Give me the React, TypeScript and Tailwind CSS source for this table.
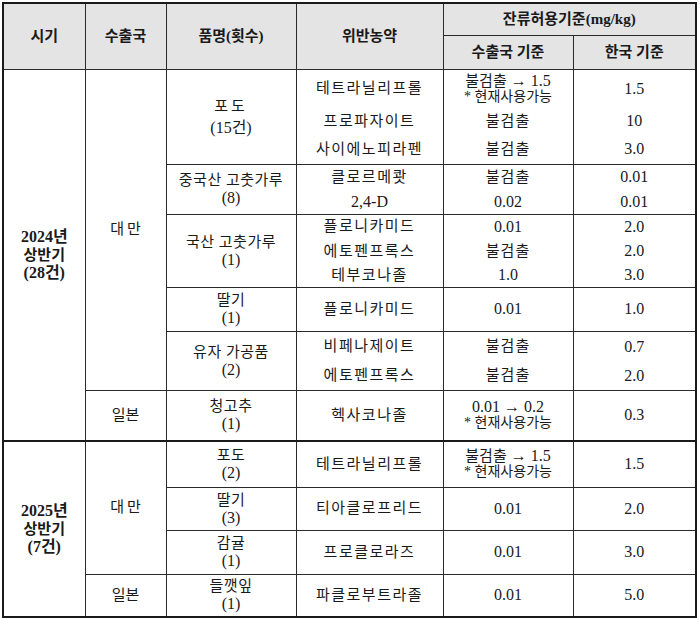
type Line = { name: string; exp: string[]; kr: string; h: number }
type Item = { product: string; count: string; lines: Line[]; gap?: boolean }
type Country = { name: string; wide?: boolean; items: Item[] }
type Period = { year: string; total: string; countries: Country[] }

const NOW = '* 현재사용가능'

const PERIODS: Period[] = [
  {
    year: '2024년',
    total: '(28건)',
    countries: [
      {
        name: '대만',
        wide: true,
        items: [
          {
            product: '포도',
            count: '(15건)',
            gap: true,
            lines: [
              { name: '테트라닐리프롤', exp: ['불검출 → 1.5', NOW], kr: '1.5', h: 38 },
              { name: '프로파자이트', exp: ['불검출'], kr: '10', h: 27 },
              { name: '사이에노피라펜', exp: ['불검출'], kr: '3.0', h: 29 },
            ],
          },
          {
            product: '중국산 고춧가루',
            count: '(8)',
            lines: [
              { name: '클로르메쾃', exp: ['불검출'], kr: '0.01', h: 25 },
              { name: '2,4-D', exp: ['0.02'], kr: '0.01', h: 24 },
            ],
          },
          {
            product: '국산 고춧가루',
            count: '(1)',
            lines: [
              { name: '플로니카미드', exp: ['0.01'], kr: '2.0', h: 24 },
              { name: '에토펜프록스', exp: ['불검출'], kr: '2.0', h: 25 },
              { name: '테부코나졸', exp: ['1.0'], kr: '3.0', h: 23 },
            ],
          },
          {
            product: '딸기',
            count: '(1)',
            lines: [{ name: '플로니카미드', exp: ['0.01'], kr: '1.0', h: 43 }],
          },
          {
            product: '유자 가공품',
            count: '(2)',
            lines: [
              { name: '비페나제이트', exp: ['불검출'], kr: '0.7', h: 30 },
              { name: '에토펜프록스', exp: ['불검출'], kr: '2.0', h: 28 },
            ],
          },
        ],
      },
      {
        name: '일본',
        items: [
          {
            product: '청고추',
            count: '(1)',
            lines: [{ name: '헥사코나졸', exp: ['0.01 → 0.2', NOW], kr: '0.3', h: 49 }],
          },
        ],
      },
    ],
  },
  {
    year: '2025년',
    total: '(7건)',
    countries: [
      {
        name: '대만',
        wide: true,
        items: [
          {
            product: '포도',
            count: '(2)',
            lines: [{ name: '테트라닐리프롤', exp: ['불검출 → 1.5', NOW], kr: '1.5', h: 45 }],
          },
          {
            product: '딸기',
            count: '(3)',
            lines: [{ name: '티아클로프리드', exp: ['0.01'], kr: '2.0', h: 42 }],
          },
          {
            product: '감귤',
            count: '(1)',
            lines: [{ name: '프로클로라즈', exp: ['0.01'], kr: '3.0', h: 43 }],
          },
        ],
      },
      {
        name: '일본',
        items: [
          {
            product: '들깻잎',
            count: '(1)',
            lines: [{ name: '파클로부트라졸', exp: ['0.01'], kr: '5.0', h: 41 }],
          },
        ],
      },
    ],
  },
]

const cell = 'border border-[#2a2a2a] p-0 text-center align-middle'
const num = 'text-[16px]'

function Stack({ lines, pick }: { lines: Line[]; pick: 'name' | 'exp' | 'kr' }) {
  return (
    <div className="flex flex-col">
      {lines.map((l, i) => (
        <div key={i} className="flex flex-col items-center justify-center" style={{ height: l.h }}>
          {pick === 'name' &&
            (/^[0-9]/.test(l.name) ? (
              <span className={num}>{l.name}</span>
            ) : (
              <span className="tracking-[1.5px]">{l.name}</span>
            ))}
          {pick === 'kr' && <span className={num}>{l.kr}</span>}
          {pick === 'exp' &&
            (l.exp.length > 1 ? (
              <div className="leading-[16px]">
                <div className={num}>
                  {l.exp[0].startsWith('불') ? (
                    <>
                      <span className="text-[15px]">불검출</span>
                      {l.exp[0].slice(3)}
                    </>
                  ) : (
                    l.exp[0]
                  )}
                </div>
                <div className="text-[14px]">{l.exp[1]}</div>
              </div>
            ) : /^[0-9]/.test(l.exp[0]) ? (
              <span className={num}>{l.exp[0]}</span>
            ) : (
              <span className="tracking-[1px]">{l.exp[0]}</span>
            ))}
        </div>
      ))}
    </div>
  )
}

export default function App() {
  return (
    <div
      className="min-h-[618px] bg-white pl-[2px] pt-[2px] text-[15px] text-[#1a1a1a]"
      style={{ fontFamily: '"Liberation Serif", "Noto Sans CJK KR", serif' }}
    >
      <div className="w-[695px] border-2 border-[#1a1a1a]">
        <table className="w-full table-fixed border-collapse border-hidden">
          <colgroup>
            <col className="w-[81px]" />
            <col className="w-[81px]" />
            <col className="w-[130px]" />
            <col className="w-[147px]" />
            <col className="w-[130px]" />
            <col />
          </colgroup>
          <thead className="bg-[#e4e4e4] font-bold">
            <tr className="h-[31px]">
              <th rowSpan={2} className={cell}>시기</th>
              <th rowSpan={2} className={cell}>수출국</th>
              <th rowSpan={2} className={cell}>품명(횟수)</th>
              <th rowSpan={2} className={cell}>위반농약</th>
              <th colSpan={2} className={cell}>잔류허용기준(mg/kg)</th>
            </tr>
            <tr className="h-[34px]">
              <th className={cell}>수출국 기준</th>
              <th className={cell}>한국 기준</th>
            </tr>
          </thead>
          <tbody>
            {PERIODS.map((p, pi) => {
              const rows = p.countries.reduce((n, c) => n + c.items.length, 0)
              return p.countries.map((c, ci) =>
                c.items.map((it, ii) => {
                  const top = pi > 0 && ci === 0 && ii === 0 ? 'border-t-2 border-t-[#1a1a1a]' : ''
                  return (
                    <tr key={`${pi}-${ci}-${ii}`}>
                      {ci === 0 && ii === 0 && (
                        <td rowSpan={rows} className={`${cell} ${top} font-bold leading-[18px]`}>
                          <div className="text-[16px]">{p.year}</div>
                          <div>상반기</div>
                          <div className="text-[16px]">{p.total}</div>
                        </td>
                      )}
                      {ii === 0 && (
                        <td rowSpan={c.items.length} className={`${cell} ${top}`}>
                          <span className={c.wide ? 'tracking-[3px] pl-[3px]' : ''}>{c.name}</span>
                        </td>
                      )}
                      <td className={`${cell} ${top}`}>
                        <div className={it.gap ? 'leading-[21px]' : 'leading-[17px]'}>
                          <div className={it.gap ? 'tracking-[3px]' : 'tracking-[0.5px]'}>{it.product}</div>
                          <div className={num}>{it.count}</div>
                        </div>
                      </td>
                      <td className={`${cell} ${top}`}>
                        <Stack lines={it.lines} pick="name" />
                      </td>
                      <td className={`${cell} ${top}`}>
                        <Stack lines={it.lines} pick="exp" />
                      </td>
                      <td className={`${cell} ${top}`}>
                        <Stack lines={it.lines} pick="kr" />
                      </td>
                    </tr>
                  )
                }),
              )
            })}
          </tbody>
        </table>
      </div>
    </div>
  )
}
